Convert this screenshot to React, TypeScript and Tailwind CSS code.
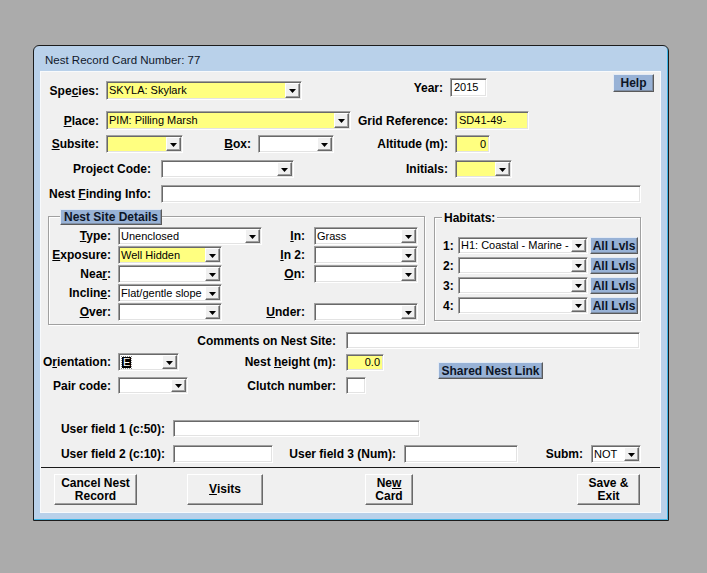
import React from 'react';

const sans = "font-['Liberation_Sans',Arial,sans-serif]";

const sunken =
  'border border-t-[#a0a0a0] border-l-[#a0a0a0] border-r-white border-b-white shadow-[inset_1px_1px_0_#696969,inset_-1px_-1px_0_#e3e3e3]';
const raised =
  'border border-t-white border-l-white border-r-[#696969] border-b-[#696969] shadow-[inset_-1px_-1px_0_#a0a0a0]';
const blue =
  'bg-[#98b2d6] border border-t-[#e4ebf5] border-l-[#e4ebf5] border-r-[#5a5a5a] border-b-[#5a5a5a] shadow-[inset_-1px_-1px_0_#7f8fa6]';

type Kids = { className?: string; children?: React.ReactNode };

const Lbl: React.FC<Kids> = ({ className = '', children }) => (
  <div
    className={`flex h-full shrink-0 items-center justify-end whitespace-nowrap text-[12px] font-bold leading-none text-black ${className}`}
  >
    {children}
  </div>
);

const Field: React.FC<Kids & { yellow?: boolean; right?: boolean }> = ({ className = '', yellow, right, children }) => (
  <div
    className={`flex h-full shrink-0 items-center overflow-hidden whitespace-nowrap px-[3px] text-[11px] leading-none text-black ${sunken} ${
      yellow ? 'bg-[#ffff80]' : 'bg-white'
    } ${right ? 'justify-end' : ''} ${className}`}
  >
    {children}
  </div>
);

const Arrow = () => (
  <svg width="7" height="4" viewBox="0 0 7 4" className="mt-px">
    <path d="M0 0h7L3.5 4z" fill="#000" />
  </svg>
);

const Combo: React.FC<Kids & { yellow?: boolean }> = ({ className = '', yellow, children }) => (
  <div className={`flex h-full shrink-0 p-px ${sunken} ${yellow ? 'bg-[#ffff80]' : 'bg-white'} ${className}`}>
    <div className="flex min-w-0 flex-1 items-center overflow-hidden whitespace-nowrap pl-px text-[11px] leading-none text-black">
      {children}
    </div>
    <div className={`flex w-[15px] shrink-0 items-center justify-center bg-[#f0f0f0] ${raised}`}>
      <Arrow />
    </div>
  </div>
);

const SiteRow: React.FC<{
  left: React.ReactNode;
  leftW: string;
  leftYellow?: boolean;
  leftValue?: string;
  right?: React.ReactNode;
  rightValue?: string;
  first?: boolean;
}> = ({ left, leftW, leftYellow, leftValue, right, rightValue, first }) => (
  <div className={`flex h-[18px] items-center ${first ? 'mt-[2px]' : 'mt-px'}`}>
    <div className="flex h-full w-[213px] shrink-0">
      <Lbl className="w-[62px]">{left}</Lbl>
      <Combo yellow={leftYellow} className={`ml-[7px] ${leftW}`}>
        {leftValue}
      </Combo>
    </div>
    {right && (
      <>
        <Lbl className="w-[43px]">{right}</Lbl>
        <Combo className="ml-[9px] w-[104px]">{rightValue}</Combo>
      </>
    )}
  </div>
);

const HabRow: React.FC<{ n: string; value?: string; first?: boolean }> = ({ n, value, first }) => (
  <div className={`ml-[8px] flex h-[17px] items-center ${first ? 'mt-[11px]' : 'mt-[3px]'}`}>
    <div className="flex h-full w-[15px] shrink-0 items-center text-[12px] font-bold leading-none">{n}</div>
    <Combo className="w-[130px]">{value}</Combo>
    <button
      className={`ml-[2px] h-full w-[48px] shrink-0 whitespace-nowrap text-[12px] font-bold leading-none text-[#0d1526] ${blue}`}
    >
      All Lvls
    </button>
  </div>
);

const GrayBtn: React.FC<Kids> = ({ className = '', children }) => (
  <button
    className={`flex h-[31px] shrink-0 flex-col items-center justify-center whitespace-nowrap bg-[#f0f0f0] text-[12px] font-bold leading-[13px] text-black ${raised} ${className}`}
  >
    {children}
  </button>
);

export default function App() {
  return (
    <div className={`min-h-screen bg-[#ababab] pl-[33px] pt-[45px] ${sans}`}>
      <div className="flex h-[476px] w-[636px] flex-col rounded-t-[6px] border border-[#1c1c1c] bg-[#b9d1ea] shadow-[inset_-1px_-1px_0_#3fb5e6]">
        <div className="flex h-[26px] shrink-0 items-center pl-[11px] pt-[4px] text-[11.5px] text-[#10182a]">
          Nest Record Card Number: 77
        </div>

        <div className="ml-[7px] flex h-[440px] w-[619px] flex-col bg-[#f0f0f0] shadow-[0_0_0_1px_#f8fafc]">
          {/* species / year / help */}
          <div className="flex h-[28px] items-start pt-[2px]">
            <Lbl className="mt-[7px] h-[19px]! w-[58px]">
              <span>
                Spe<u>c</u>ies:
              </span>
            </Lbl>
            <Combo yellow className="ml-[7px] mt-[7px] h-[19px]! w-[196px]">
              SKYLA: Skylark
            </Combo>
            <Lbl className="mt-[4px] h-[19px]! w-[141px]">Year:</Lbl>
            <Field className="ml-[7px] mt-[4px] h-[19px]! w-[37px]">2015</Field>
            <button
              className={`ml-[126px] h-[18px] w-[41px] whitespace-nowrap text-[12px] font-bold leading-none text-[#0d1526] ${blue}`}
            >
              Help
            </button>
          </div>

          <div className="mt-[11px] flex h-[19px] items-center">
            <Lbl className="w-[58px]">
              <span>
                <u>P</u>lace:
              </span>
            </Lbl>
            <Combo yellow className="ml-[7px] w-[245px]">
              PIM: Pilling Marsh
            </Combo>
            <Lbl className="w-[97px]">Grid Reference:</Lbl>
            <Field yellow className="ml-[7px] w-[74px]">
              SD41-49-
            </Field>
          </div>

          <div className="mt-[5px] flex h-[18px] items-center">
            <Lbl className="w-[58px]">
              <span>
                <u>S</u>ubsite:
              </span>
            </Lbl>
            <Combo yellow className="ml-[7px] w-[77px]" />
            <Lbl className="w-[68px]">
              <span>
                <u>B</u>ox:
              </span>
            </Lbl>
            <Combo className="ml-[7px] w-[76px]" />
            <Lbl className="w-[114px]">Altitude (m):</Lbl>
            <Field yellow right className="ml-[7px] w-[35px]">
              0
            </Field>
          </div>

          <div className="mt-[7px] flex h-[18px] items-center">
            <Lbl className="w-[110px]">Project Code:</Lbl>
            <Combo className="ml-[10px] w-[133px]" />
            <Lbl className="w-[154px]">Initials:</Lbl>
            <Combo yellow className="ml-[7px] w-[57px]" />
          </div>

          <div className="mt-[7px] flex h-[18px] items-center">
            <Lbl className="w-[110px]">
              <span>
                Nest <u>F</u>inding Info:
              </span>
            </Lbl>
            <Field className="ml-[10px] w-[480px]" />
          </div>

          {/* group boxes */}
          <div className="mt-[6px] flex items-start">
            <div className="ml-[7px] mt-[7px] flex h-[109px] w-[377px] flex-col border border-[#a0a0a0] shadow-[inset_1px_1px_0_#fff,1px_1px_0_#fff]">
              <div
                className={`-mt-[8px] ml-[11px] flex h-[16px] w-[102px] items-center justify-center self-start whitespace-nowrap text-[12px] font-bold leading-none text-[#0d1526] ${blue}`}
              >
                Nest Site Details
              </div>
              <SiteRow
                first
                left={
                  <span>
                    <u>T</u>ype:
                  </span>
                }
                leftW="w-[144px]"
                leftValue="Unenclosed"
                right={
                  <span>
                    <u>I</u>n:
                  </span>
                }
                rightValue="Grass"
              />
              <SiteRow
                left={
                  <span>
                    <u>E</u>xposure:
                  </span>
                }
                leftW="w-[104px]"
                leftYellow
                leftValue="Well Hidden"
                right={
                  <span>
                    <u>I</u>n 2:
                  </span>
                }
              />
              <SiteRow
                left={
                  <span>
                    Nea<u>r</u>:
                  </span>
                }
                leftW="w-[104px]"
                right={
                  <span>
                    <u>O</u>n:
                  </span>
                }
              />
              <SiteRow
                left={
                  <span>
                    Inclin<u>e</u>:
                  </span>
                }
                leftW="w-[104px]"
                leftValue="Flat/gentle slope"
              />
              <SiteRow
                left={
                  <span>
                    <u>O</u>ver:
                  </span>
                }
                leftW="w-[104px]"
                right={
                  <span>
                    <u>U</u>nder:
                  </span>
                }
              />
            </div>

            <div className="ml-[9px] mt-[8px] flex h-[104px] w-[207px] flex-col border border-[#a0a0a0] shadow-[inset_1px_1px_0_#fff,1px_1px_0_#fff]">
              <div className="-mt-[8px] ml-[7px] flex h-[16px] items-center self-start bg-[#f0f0f0] px-[2px] text-[12px] font-bold leading-none">
                Habitats:
              </div>
              <HabRow first n="1:" value="H1: Coastal - Marine - coastal" />
              <HabRow n="2:" />
              <HabRow n="3:" />
              <HabRow n="4:" />
            </div>
          </div>

          <div className="mt-[7px] flex h-[17px] items-center">
            <Lbl className="w-[295px]">Comments on Nest Site:</Lbl>
            <Field className="ml-[10px] w-[294px]" />
          </div>

          <div className="mt-[4px] flex h-[18px] items-center">
            <Lbl className="w-[70px]">
              <span>
                O<u>r</u>ientation:
              </span>
            </Lbl>
            <Combo className="ml-[7px] w-[61px]">
              <span className="ml-px bg-black px-px text-white outline-1 outline-dotted outline-[#888]">E</span>
            </Combo>
            <Lbl className="w-[157px]">
              <span>
                Nest <u>h</u>eight (m):
              </span>
            </Lbl>
            <Field yellow right className="ml-[10px] h-[17px]! w-[38px]">
              0.0
            </Field>
            <button
              className={`ml-[54px] mt-[9px] h-[17px] w-[105px] shrink-0 self-start whitespace-nowrap text-[12px] font-bold leading-none text-[#0d1526] ${blue}`}
            >
              Shared Nest Link
            </button>
          </div>

          <div className="mt-[6px] flex h-[17px] items-center">
            <Lbl className="w-[70px]">Pair code:</Lbl>
            <Combo className="ml-[7px] w-[70px]" />
            <Lbl className="w-[148px]">Clutch number:</Lbl>
            <Field className="ml-[10px] w-[20px]" />
          </div>

          <div className="mt-[26px] flex h-[17px] items-center">
            <Lbl className="w-[124px]">User field 1 (c:50):</Lbl>
            <Field className="ml-[8px] w-[247px]" />
          </div>

          <div className="mt-[8px] flex h-[18px] items-center">
            <Lbl className="w-[124px]">User field 2 (c:10):</Lbl>
            <Field className="ml-[8px] w-[100px]" />
            <Lbl className="w-[123px]">User field 3 (Num):</Lbl>
            <Field className="ml-[8px] w-[114px]" />
            <Lbl className="w-[65px]">Subm:</Lbl>
            <Combo className="ml-[8px] w-[50px]">NOT</Combo>
          </div>

          <div className="mt-[4px] h-px bg-[#1a1a1a]" />

          <div className="mt-[6px] flex items-start">
            <GrayBtn className="ml-[13px] w-[83px]">
              <span>Cancel Nest</span>
              <span>Record</span>
            </GrayBtn>
            <GrayBtn className="ml-[50px] w-[76px]">
              <span>
                <u>V</u>isits
              </span>
            </GrayBtn>
            <GrayBtn className="ml-[102px] w-[48px]">
              <span>
                Ne<u>w</u>
              </span>
              <span>Card</span>
            </GrayBtn>
            <GrayBtn className="ml-[164px] w-[63px]">
              <span>Save &amp;</span>
              <span>Exit</span>
            </GrayBtn>
          </div>
        </div>
      </div>
    </div>
  );
}
